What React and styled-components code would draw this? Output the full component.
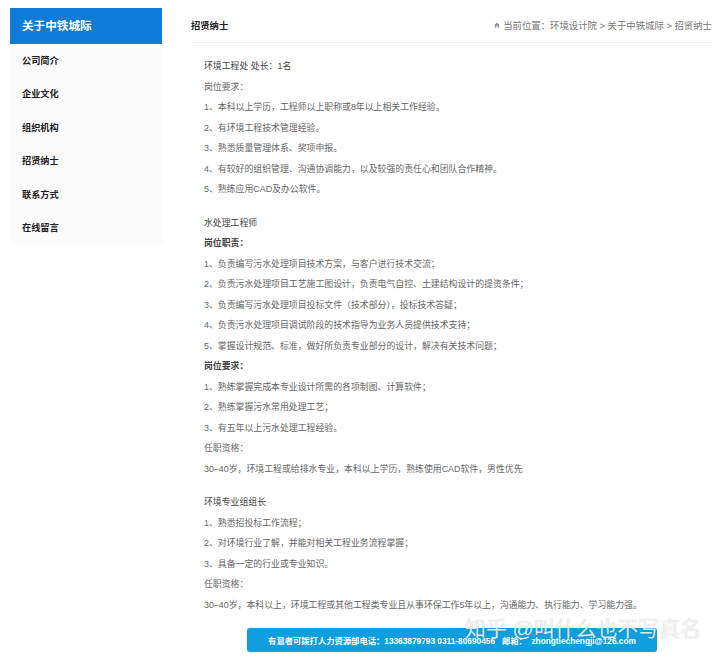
import React from "react";
import styled, { createGlobalStyle } from "styled-components";

const Global = createGlobalStyle`
  html, body { margin: 0; padding: 0; background: #fff; }
  body { font-family: "Liberation Sans", "Noto Sans CJK SC", sans-serif; }
`;
const Page = styled.div`
  position: relative;
  width: 720px;
  height: 658px;
  overflow: hidden;
  display: flex;
  align-items: flex-start;
  padding: 8px 8px 0 10px;
  box-sizing: border-box;
  gap: 29px;
`;
const Sidebar = styled.aside`
  width: 152px;
  flex: none;
  background: #fbfbfb;
  border-radius: 0 0 3px 3px;
  box-shadow: 0 1px 4px rgba(0, 0, 0, 0.02);
`;
const SideHead = styled.div`
  height: 36px;
  line-height: 35px;
  padding-left: 12px;
  background: #0f7dd8;
  color: #fff;
  font-size: 11.6px;
  font-weight: 700;
`;
const SideList = styled.ul`
  list-style: none;
  margin: 0;
  padding: 0;
`;
const SideItem = styled.li`
  height: 33.4px;
  line-height: 35px;
  padding-left: 12px;
  font-size: 9.2px;
  font-weight: 700;
  color: #222;
`;
const Main = styled.main`
  flex: 1;
  min-width: 0;
`;
const TopBar = styled.header`
  height: 34px;
  display: flex;
  justify-content: space-between;
  align-items: center;
  border-bottom: 1px solid #eeeeee;
`;
const PageTitle = styled.h1`
  margin: 0;
  font-size: 9.3px;
  font-weight: 700;
  color: #222;
`;
const Crumbs = styled.div`
  display: flex;
  align-items: center;
  gap: 3px;
  font-size: 9.4px;
  color: #777;
  white-space: nowrap;
`;
const Article = styled.article`
  padding: 13px 0 0 13px;
`;
const Line = styled.p`
  margin: 0;
  height: 20.5px;
  line-height: 20.5px;
  font-size: 8.9px;
  white-space: nowrap;
  color: ${(p) => (p.$strong ? "#444" : "#666")};
  font-weight: ${(p) => (p.$bold ? 700 : 400)};
`;
const Section = styled.section`
  margin-bottom: 13px;
`;
const ContactBar = styled.div`
  width: 410px;
  height: 24px;
  margin: 2px 0 0 56px;
  border-radius: 3px;
  background: #109ede;
  color: #fff;
  font-size: 8.3px;
  font-weight: 700;
  display: flex;
  align-items: center;
  justify-content: center;
  white-space: pre;
`;
const Watermark = styled.div`
  position: absolute;
  left: 465px;
  top: 612px;
  font-size: 20.9px;
  line-height: 34px;
  color: rgba(255, 255, 255, 0.82);
  text-shadow: 0 0 1px rgba(120, 120, 120, 0.5);
  white-space: nowrap;
`;

const C = "\uFF0C"; // fullwidth comma
const K = "\uFF1A"; // fullwidth colon
const S = "\uFF1B"; // fullwidth semicolon
const L = "\uFF08"; // fullwidth left paren
const R = "\uFF09"; // fullwidth right paren

const sections = [
  [
    [`环境工程处 处长${K}1名`, "strong"],
    [`岗位要求${K}`],
    [`1、本科以上学历${C}工程师以上职称或8年以上相关工作经验。`],
    ["2、有环境工程技术管理经验。"],
    ["3、熟悉质量管理体系、奖项申报。"],
    [`4、有较好的组织管理、沟通协调能力${C}以及较强的责任心和团队合作精神。`],
    ["5、熟练应用CAD及办公软件。"],
  ],
  [
    ["水处理工程师", "strong"],
    [`岗位职责${K}`, "bold"],
    [`1、负责编写污水处理项目技术方案${C}与客户进行技术交流${S}`],
    [`2、负责污水处理项目工艺施工图设计${C}负责电气自控、土建结构设计的提资条件${S}`],
    [`3、负责编写污水处理项目投标文件${L}技术部分${R}${C}投标技术答疑${S}`],
    [`4、负责污水处理项目调试阶段的技术指导为业务人员提供技术支持${S}`],
    [`5、掌握设计规范、标准${C}做好所负责专业部分的设计${C}解决有关技术问题${S}`],
    [`岗位要求${K}`, "bold"],
    [`1、熟练掌握完成本专业设计所需的各项制图、计算软件${S}`],
    [`2、熟练掌握污水常用处理工艺${S}`],
    ["3、有五年以上污水处理工程经验。"],
    [`任职资格${K}`],
    [`30–40岁${C}环境工程或给排水专业${C}本科以上学历${C}熟练使用CAD软件${C}男性优先`],
  ],
  [
    ["环境专业组组长", "strong"],
    [`1、熟悉招投标工作流程${S}`],
    [`2、对环境行业了解${C}并能对相关工程业务流程掌握${S}`],
    ["3、具备一定的行业或专业知识。"],
    [`任职资格${K}`],
    [`30–40岁${C}本科以上${C}环境工程或其他工程类专业且从事环保工作5年以上${C}沟通能力、执行能力、学习能力强。`],
  ],
];

const menu = ["公司简介", "企业文化", "组织机构", "招贤纳士", "联系方式", "在线留言"];

const HomeIcon = () => (
  <svg width="6" height="6" viewBox="0 0 10 10" fill="#999">
    <path d="M5 1 L10 5.4 H8.6 V9.4 H6 V6.4 H4 V9.4 H1.4 V5.4 H0 Z" />
  </svg>
);

export default function App() {
  return (
    <Page>
      <Global />
      <Sidebar>
        <SideHead>关于中铁城际</SideHead>
        <SideList>
          {menu.map((m) => (
            <SideItem key={m}>{m}</SideItem>
          ))}
        </SideList>
      </Sidebar>
      <Main>
        <TopBar>
          <PageTitle>招贤纳士</PageTitle>
          <Crumbs>
            <HomeIcon />
            <span>{`当前位置${K}环境设计院 > 关于中铁城际 > 招贤纳士`}</span>
          </Crumbs>
        </TopBar>
        <Article>
          {sections.map((s, i) => (
            <Section key={i}>
              {s.map(([t, kind]) => (
                <Line key={t} $strong={kind === "strong" || kind === "bold"} $bold={kind === "bold"}>
                  {t}
                </Line>
              ))}
            </Section>
          ))}
        </Article>
        <ContactBar>{`有意者可拨打人力资源部电话${K}13363879793 0311-80690456   邮箱${K}  zhongtiechengji@126.com`}</ContactBar>
      </Main>
      <Watermark>知乎 @叫什么也不写真名</Watermark>
    </Page>
  );
}
